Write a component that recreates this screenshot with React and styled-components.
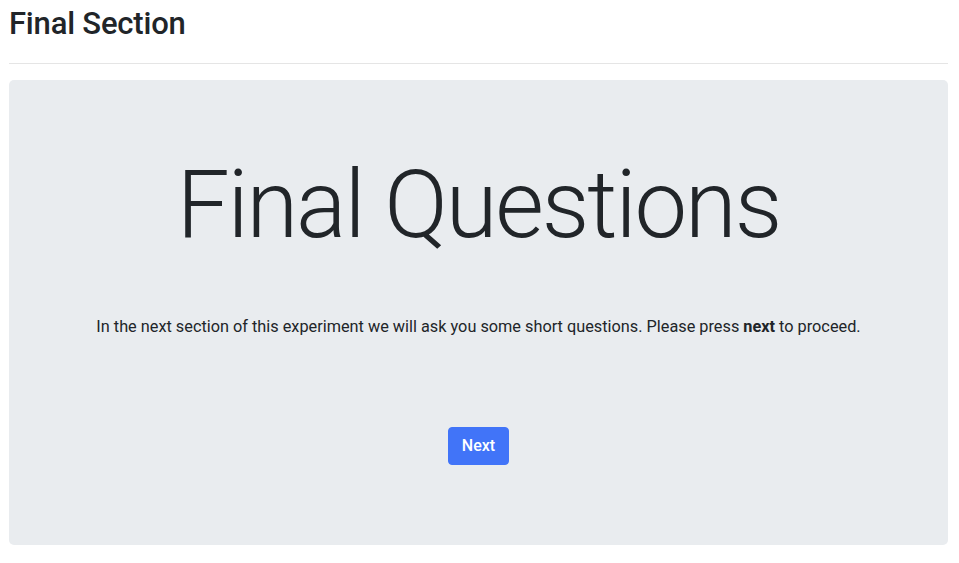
import React from 'react';
import styled, { createGlobalStyle } from 'styled-components';

const GlobalStyle = createGlobalStyle`
  html, body {
    margin: 0;
    padding: 0;
    background: #fff;
  }
  body {
    font-family: Roboto, Inter, "Liberation Sans", sans-serif;
    color: #212529;
    font-size: 16px;
    line-height: 1.5;
  }
`;

const Page = styled.div`
  padding: 0 11px 0 9px;
`;

const Heading = styled.h2`
  margin: 5px 0 0;
  font-size: 31px;
  font-weight: 500;
  line-height: 1.2;
  letter-spacing: -0.2px;
`;

const Rule = styled.hr`
  margin: 21px 0 16px;
  border: 0;
  border-top: 1px solid rgba(0, 0, 0, 0.1);
`;

const Jumbotron = styled.div`
  background-color: #e9ecef;
  border-radius: 5px;
  padding: 64px 32px;
  text-align: center;
`;

const Display = styled.h1`
  margin: 5px 0 53px;
  font-size: 94px;
  font-weight: 300;
  line-height: 1.2;
  letter-spacing: -2.1px;
`;

const Lead = styled.p`
  margin: 0 0 88px;
  font-size: 16.3px;
`;

const Button = styled.button`
  font-family: inherit;
  font-size: 16px;
  font-weight: 500;
  line-height: 24px;
  height: 38px;
  color: #fff;
  background-color: #4174f8;
  border: 1px solid #4174f8;
  border-radius: 4px;
  padding: 6px 12.5px;
  margin-bottom: 16px;
  cursor: pointer;
`;

const App = () => (
  <Page>
    <GlobalStyle />
    <Heading>Final Section</Heading>
    <Rule />
    <Jumbotron>
      <Display>Final Questions</Display>
      <Lead>
        In the next section of this experiment we will ask you some short questions. Please press <b>next</b> to proceed.
      </Lead>
      <Button>Next</Button>
    </Jumbotron>
  </Page>
);

export default App;
